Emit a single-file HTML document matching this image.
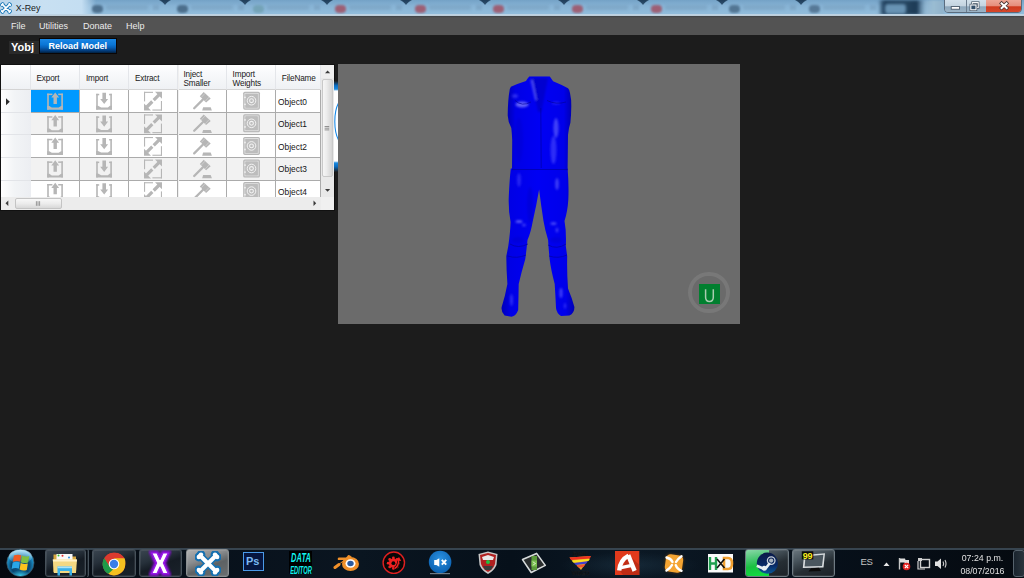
<!DOCTYPE html><html><head><meta charset="utf-8"><style>
*{margin:0;padding:0;box-sizing:border-box}
html,body{width:1024px;height:578px;overflow:hidden;background:#1c1c1c;font-family:"Liberation Sans",sans-serif}
.a{position:absolute}
#title{left:0;top:0;width:1024px;height:16px;background:linear-gradient(#74a2c6,#86b2d4 35%,#8ebada 70%,#94bedc);overflow:hidden}
#menubar{left:0;top:16px;width:1024px;height:18.8px;background:linear-gradient(#3c4044 0,#4a4c4e 1px,#535353 2px,#535353)}
.menu{top:0;height:18px;line-height:20px;font-size:9px;color:#ececec}
#taskbar{left:0;top:548px;width:1024px;height:30px;background:#0a1119;overflow:hidden}
#grid{left:1px;top:65px;width:332px;height:145px;background:#f0f0f0;overflow:hidden}
.hdr{top:0;height:24.5px;background:linear-gradient(#ffffff,#f8f9fb 35%,#eff1f4);border-right:1px solid #e4e6ea;border-bottom:1px solid #d4d4d4}
.ht{position:absolute;font-size:8.2px;line-height:9px;color:#202020;white-space:nowrap;letter-spacing:-0.15px}
.rh{left:0;width:30.5px;background:linear-gradient(90deg,#ffffff,#f2f4f6 45%,#eceef2);border-bottom:1px solid #e2e4e8;border-right:1px solid #b4b4b4}
.cell{border-right:1px solid #ababab;border-bottom:1px solid #ababab;overflow:hidden}
.fn{position:absolute;font-size:8.4px;color:#151515;white-space:nowrap}
</style></head><body>
<div id="title" class="a">
<div class="a" style="left:159px;top:0;width:12px;height:4px;background:linear-gradient(#2a4a66,#5a86aa);clip-path:polygon(0 0,100% 0,50% 100%)"></div>
<div class="a" style="left:239px;top:0;width:12px;height:4px;background:linear-gradient(#2a4a66,#5a86aa);clip-path:polygon(0 0,100% 0,50% 100%)"></div>
<div class="a" style="left:321px;top:0;width:12px;height:4px;background:linear-gradient(#2a4a66,#5a86aa);clip-path:polygon(0 0,100% 0,50% 100%)"></div>
<div class="a" style="left:400px;top:0;width:12px;height:4px;background:linear-gradient(#2a4a66,#5a86aa);clip-path:polygon(0 0,100% 0,50% 100%)"></div>
<div class="a" style="left:479px;top:0;width:12px;height:4px;background:linear-gradient(#2a4a66,#5a86aa);clip-path:polygon(0 0,100% 0,50% 100%)"></div>
<div class="a" style="left:558px;top:0;width:12px;height:4px;background:linear-gradient(#2a4a66,#5a86aa);clip-path:polygon(0 0,100% 0,50% 100%)"></div>
<div class="a" style="left:637px;top:0;width:12px;height:4px;background:linear-gradient(#2a4a66,#5a86aa);clip-path:polygon(0 0,100% 0,50% 100%)"></div>
<div class="a" style="left:716px;top:0;width:12px;height:4px;background:linear-gradient(#2a4a66,#5a86aa);clip-path:polygon(0 0,100% 0,50% 100%)"></div>
<div class="a" style="left:795px;top:0;width:12px;height:4px;background:linear-gradient(#2a4a66,#5a86aa);clip-path:polygon(0 0,100% 0,50% 100%)"></div>
</div>
<div class="a" style="left:0;top:0;width:96px;height:15px;background:linear-gradient(90deg,#bcd6ea 0,#c8e0f2 45%,#c4def2 85%,rgba(160,196,222,0) 100%)"></div>
<div class="a" style="left:91.5px;top:4.5px;width:11px;height:8.5px;border-radius:40%;background:#3f5f7c;filter:blur(1.2px);opacity:0.8"></div>
<div class="a" style="left:106px;top:5px;width:42px;height:5px;background:#6a8eac;filter:blur(1.6px);opacity:0.3"></div>
<div class="a" style="left:153px;top:5px;width:6px;height:5px;background:#6f93b2;filter:blur(1.2px);opacity:0.4"></div>
<div class="a" style="left:176.5px;top:4.5px;width:11px;height:8.5px;border-radius:40%;background:#3d5d7a;filter:blur(1.2px);opacity:0.8"></div>
<div class="a" style="left:191px;top:5px;width:42px;height:5px;background:#6a8eac;filter:blur(1.6px);opacity:0.3"></div>
<div class="a" style="left:238px;top:5px;width:6px;height:5px;background:#6f93b2;filter:blur(1.2px);opacity:0.4"></div>
<div class="a" style="left:252.5px;top:4.5px;width:11px;height:8.5px;border-radius:40%;background:#6f9fb0;filter:blur(1.2px);opacity:0.8"></div>
<div class="a" style="left:267px;top:5px;width:42px;height:5px;background:#6a8eac;filter:blur(1.6px);opacity:0.3"></div>
<div class="a" style="left:314px;top:5px;width:6px;height:5px;background:#6f93b2;filter:blur(1.2px);opacity:0.4"></div>
<div class="a" style="left:334.5px;top:4.5px;width:11px;height:8.5px;border-radius:40%;background:#a24a5c;filter:blur(1.2px);opacity:0.8"></div>
<div class="a" style="left:349px;top:5px;width:42px;height:5px;background:#6a8eac;filter:blur(1.6px);opacity:0.3"></div>
<div class="a" style="left:396px;top:5px;width:6px;height:5px;background:#6f93b2;filter:blur(1.2px);opacity:0.4"></div>
<div class="a" style="left:414.5px;top:4.5px;width:11px;height:8.5px;border-radius:40%;background:#a24a5c;filter:blur(1.2px);opacity:0.8"></div>
<div class="a" style="left:429px;top:5px;width:42px;height:5px;background:#6a8eac;filter:blur(1.6px);opacity:0.3"></div>
<div class="a" style="left:476px;top:5px;width:6px;height:5px;background:#6f93b2;filter:blur(1.2px);opacity:0.4"></div>
<div class="a" style="left:492.5px;top:4.5px;width:11px;height:8.5px;border-radius:40%;background:#a24a5c;filter:blur(1.2px);opacity:0.8"></div>
<div class="a" style="left:507px;top:5px;width:42px;height:5px;background:#6a8eac;filter:blur(1.6px);opacity:0.3"></div>
<div class="a" style="left:554px;top:5px;width:6px;height:5px;background:#6f93b2;filter:blur(1.2px);opacity:0.4"></div>
<div class="a" style="left:571.5px;top:4.5px;width:11px;height:8.5px;border-radius:40%;background:#a24a5c;filter:blur(1.2px);opacity:0.8"></div>
<div class="a" style="left:586px;top:5px;width:42px;height:5px;background:#6a8eac;filter:blur(1.6px);opacity:0.3"></div>
<div class="a" style="left:633px;top:5px;width:6px;height:5px;background:#6f93b2;filter:blur(1.2px);opacity:0.4"></div>
<div class="a" style="left:650.5px;top:4.5px;width:11px;height:8.5px;border-radius:40%;background:#a24a5c;filter:blur(1.2px);opacity:0.8"></div>
<div class="a" style="left:665px;top:5px;width:42px;height:5px;background:#6a8eac;filter:blur(1.6px);opacity:0.3"></div>
<div class="a" style="left:712px;top:5px;width:6px;height:5px;background:#6f93b2;filter:blur(1.2px);opacity:0.4"></div>
<div class="a" style="left:728.5px;top:4.5px;width:11px;height:8.5px;border-radius:40%;background:#456683;filter:blur(1.2px);opacity:0.8"></div>
<div class="a" style="left:743px;top:5px;width:42px;height:5px;background:#6a8eac;filter:blur(1.6px);opacity:0.3"></div>
<div class="a" style="left:790px;top:5px;width:6px;height:5px;background:#6f93b2;filter:blur(1.2px);opacity:0.4"></div>
<div class="a" style="left:808.5px;top:4.5px;width:11px;height:8.5px;border-radius:40%;background:#4a6a88;filter:blur(1.2px);opacity:0.8"></div>
<div class="a" style="left:823px;top:5px;width:42px;height:5px;background:#6a8eac;filter:blur(1.6px);opacity:0.3"></div>
<div class="a" style="left:870px;top:5px;width:6px;height:5px;background:#6f93b2;filter:blur(1.2px);opacity:0.4"></div>
<div class="a" style="left:160px;top:-1px;width:10px;height:6px;background:#1d3a56;clip-path:polygon(0 0,100% 0,50% 100%);filter:blur(0.6px);opacity:0.75"></div>
<div class="a" style="left:240px;top:-1px;width:10px;height:6px;background:#1d3a56;clip-path:polygon(0 0,100% 0,50% 100%);filter:blur(0.6px);opacity:0.75"></div>
<div class="a" style="left:322px;top:-1px;width:10px;height:6px;background:#1d3a56;clip-path:polygon(0 0,100% 0,50% 100%);filter:blur(0.6px);opacity:0.75"></div>
<div class="a" style="left:401px;top:-1px;width:10px;height:6px;background:#1d3a56;clip-path:polygon(0 0,100% 0,50% 100%);filter:blur(0.6px);opacity:0.75"></div>
<div class="a" style="left:480px;top:-1px;width:10px;height:6px;background:#1d3a56;clip-path:polygon(0 0,100% 0,50% 100%);filter:blur(0.6px);opacity:0.75"></div>
<div class="a" style="left:559px;top:-1px;width:10px;height:6px;background:#1d3a56;clip-path:polygon(0 0,100% 0,50% 100%);filter:blur(0.6px);opacity:0.75"></div>
<div class="a" style="left:638px;top:-1px;width:10px;height:6px;background:#1d3a56;clip-path:polygon(0 0,100% 0,50% 100%);filter:blur(0.6px);opacity:0.75"></div>
<div class="a" style="left:717px;top:-1px;width:10px;height:6px;background:#1d3a56;clip-path:polygon(0 0,100% 0,50% 100%);filter:blur(0.6px);opacity:0.75"></div>
<div class="a" style="left:796px;top:-1px;width:10px;height:6px;background:#1d3a56;clip-path:polygon(0 0,100% 0,50% 100%);filter:blur(0.6px);opacity:0.75"></div>
<div class="a" style="left:878px;top:0;width:48px;height:15px;background:linear-gradient(90deg,rgba(30,60,90,0),#1f3f5c 12%,#24445f 60%,#1c3a55 80%,rgba(60,100,130,0));filter:blur(1.5px)"></div>
<div class="a" style="left:885px;top:4px;width:21px;height:10px;border-radius:3px;background:#6893b4;filter:blur(1.5px)"></div>
<div class="a" style="left:918px;top:0;width:26px;height:15px;background:linear-gradient(90deg,rgba(140,176,200,0),#9abcd2 60%,#8fb2ca);filter:blur(1px)"></div>
<div class="a" style="left:0;top:14.2px;width:1024px;height:1.8px;background:linear-gradient(#b0cade,#cfdfea 60%,#a0b0bc)"></div>
<svg class="a" style="left:0;top:2px" width="12" height="12" viewBox="0 0 26 25">
<g stroke="#1a78b8" stroke-width="7.6" stroke-linecap="round"><path d="M5 4.5 L21 20.5 M21 4.5 L5 20.5"/></g>
<g fill="#1a78b8"><circle cx="3.8" cy="6" r="3.6"/><circle cx="6" cy="3.6" r="3.6"/><circle cx="20" cy="3.6" r="3.6"/><circle cx="22.2" cy="6" r="3.6"/><circle cx="3.8" cy="19" r="3.6"/><circle cx="6" cy="21.4" r="3.6"/><circle cx="20" cy="21.4" r="3.6"/><circle cx="22.2" cy="19" r="3.6"/></g>
<g stroke="#fff" stroke-width="3.6" stroke-linecap="round"><path d="M5 4.5 L21 20.5 M21 4.5 L5 20.5"/></g>
<g fill="#fff"><circle cx="3.8" cy="6" r="1.9"/><circle cx="6" cy="3.6" r="1.9"/><circle cx="20" cy="3.6" r="1.9"/><circle cx="22.2" cy="6" r="1.9"/><circle cx="3.8" cy="19" r="1.9"/><circle cx="6" cy="21.4" r="1.9"/><circle cx="20" cy="21.4" r="1.9"/><circle cx="22.2" cy="19" r="1.9"/></g>
</svg>
<div class="a" style="left:15.8px;top:2.4px;font:8.9px 'Liberation Sans';color:#1a1a1a;line-height:12px">X-Rey</div>
<div class="a" style="left:944px;top:-2px;width:78px;height:15.2px;border-radius:0 0 4px 4px;border:1px solid #5a6c7e;background:#9fb6c8;overflow:hidden"><div class="a" style="left:0;top:0;width:21px;height:15px;background:linear-gradient(#d4e2ec,#c4d4e0 45%,#8ea8bc 52%,#a0b8ca)"></div><div class="a" style="left:21px;top:0;width:1px;height:15px;background:#6b7d8e"></div><div class="a" style="left:22px;top:0;width:19px;height:15px;background:linear-gradient(#d4e2ec,#c4d4e0 45%,#8ea8bc 52%,#a0b8ca)"></div><div class="a" style="left:41px;top:0;width:36px;height:15px;background:linear-gradient(#eeaa9a,#e68e7c 45%,#cf3a1e 52%,#d84c30)"></div></div>
<svg class="a" style="left:944px;top:0" width="80" height="14" viewBox="0 0 80 14">
<rect x="7.2" y="6.6" width="8.4" height="2.6" fill="#fff" stroke="#3e4e5e" stroke-width="0.8"/>
<rect x="28.6" y="2.6" width="5.6" height="5" fill="none" stroke="#3e4e5e" stroke-width="2.4"/>
<rect x="28.6" y="2.6" width="5.6" height="5" fill="none" stroke="#fff" stroke-width="1.1"/>
<rect x="26.8" y="5" width="5.2" height="4.8" fill="#8aa0b4" stroke="#3e4e5e" stroke-width="2.4"/>
<rect x="26.8" y="5" width="5.2" height="4.8" fill="#34506a" stroke="#fff" stroke-width="1.1"/>
<path d="M57.6 3.4 L62.6 8 M62.6 3.4 L57.6 8" stroke="#4a3434" stroke-width="3.6" stroke-linecap="square"/>
<path d="M57.6 3.4 L62.6 8 M62.6 3.4 L57.6 8" stroke="#fff" stroke-width="2" stroke-linecap="square"/>
</svg>
<div id="menubar" class="a">
<div class="menu a" style="left:11px">File</div>
<div class="menu a" style="left:39px">Utilities</div>
<div class="menu a" style="left:83px">Donate</div>
<div class="menu a" style="left:126px">Help</div>
</div>
<div class="a" style="left:9px;top:41px;width:30px;height:12.5px;background:#2a2a2a"></div>
<div class="a" style="left:11px;top:40px;font:bold 11px 'Liberation Sans';color:#fff;line-height:14px">Yobj</div>
<div class="a" style="left:39px;top:37.7px;width:77.5px;height:16.5px;background:#0a0606;"></div>
<div class="a" style="left:40.1px;top:38.5px;width:75.9px;height:14.8px;background:linear-gradient(#1a88e6,#0a76d6 40%,#0660b8 60%,#033a78 85%,#01203e);"></div>
<div class="a" style="left:48.5px;top:40px;font:bold 9px 'Liberation Sans';color:#fff;line-height:13px">Reload Model</div>
<div class="a" style="left:0;top:64px;width:335px;height:147px;background:#111"></div>
<div id="grid" class="a">
<div class="a hdr" style="left:0;width:30px"></div>
<div class="a hdr" style="left:30px;width:49.2px"></div>
<div class="a hdr" style="left:79.2px;width:49.2px"></div>
<div class="a hdr" style="left:128.4px;width:49.099999999999994px"></div>
<div class="a hdr" style="left:177.5px;width:48.30000000000001px"></div>
<div class="a hdr" style="left:225.8px;width:48.80000000000001px"></div>
<div class="a hdr" style="left:274.6px;width:45.5px"></div>
<div class="ht" style="left:35.5px;top:9px">Export</div>
<div class="ht" style="left:84.9px;top:9px">Import</div>
<div class="ht" style="left:134px;top:9px">Extract</div>
<div class="ht" style="left:182.5px;top:4.5px">Inject<br>Smaller</div>
<div class="ht" style="left:231.6px;top:4.5px">Import<br>Weights</div>
<div class="ht" style="left:280.8px;top:9px">FileName</div>
<div class="a rh" style="top:25px;height:22.5px"></div>
<div class="a cell" style="left:30px;top:25px;width:49.2px;height:22.5px;background:#0099ff"></div>
<div class="a cell" style="left:79.2px;top:25px;width:49.2px;height:22.5px;background:#ffffff"></div>
<div class="a cell" style="left:128.4px;top:25px;width:49.099999999999994px;height:22.5px;background:#ffffff"></div>
<div class="a cell" style="left:177.5px;top:25px;width:48.30000000000001px;height:22.5px;background:#ffffff"></div>
<div class="a cell" style="left:225.8px;top:25px;width:48.80000000000001px;height:22.5px;background:#ffffff"></div>
<div class="a cell" style="left:274.6px;top:25px;width:45.5px;height:22.5px;background:#ffffff"></div>
<div class="a rh" style="top:47.5px;height:22.80000000000001px"></div>
<div class="a cell" style="left:30px;top:47.5px;width:49.2px;height:22.80000000000001px;background:#f2f2f2"></div>
<div class="a cell" style="left:79.2px;top:47.5px;width:49.2px;height:22.80000000000001px;background:#f2f2f2"></div>
<div class="a cell" style="left:128.4px;top:47.5px;width:49.099999999999994px;height:22.80000000000001px;background:#f2f2f2"></div>
<div class="a cell" style="left:177.5px;top:47.5px;width:48.30000000000001px;height:22.80000000000001px;background:#f2f2f2"></div>
<div class="a cell" style="left:225.8px;top:47.5px;width:48.80000000000001px;height:22.80000000000001px;background:#f2f2f2"></div>
<div class="a cell" style="left:274.6px;top:47.5px;width:45.5px;height:22.80000000000001px;background:#f2f2f2"></div>
<div class="a rh" style="top:70.30000000000001px;height:22.69999999999999px"></div>
<div class="a cell" style="left:30px;top:70.30000000000001px;width:49.2px;height:22.69999999999999px;background:#ffffff"></div>
<div class="a cell" style="left:79.2px;top:70.30000000000001px;width:49.2px;height:22.69999999999999px;background:#ffffff"></div>
<div class="a cell" style="left:128.4px;top:70.30000000000001px;width:49.099999999999994px;height:22.69999999999999px;background:#ffffff"></div>
<div class="a cell" style="left:177.5px;top:70.30000000000001px;width:48.30000000000001px;height:22.69999999999999px;background:#ffffff"></div>
<div class="a cell" style="left:225.8px;top:70.30000000000001px;width:48.80000000000001px;height:22.69999999999999px;background:#ffffff"></div>
<div class="a cell" style="left:274.6px;top:70.30000000000001px;width:45.5px;height:22.69999999999999px;background:#ffffff"></div>
<div class="a rh" style="top:93px;height:22.69999999999999px"></div>
<div class="a cell" style="left:30px;top:93px;width:49.2px;height:22.69999999999999px;background:#f2f2f2"></div>
<div class="a cell" style="left:79.2px;top:93px;width:49.2px;height:22.69999999999999px;background:#f2f2f2"></div>
<div class="a cell" style="left:128.4px;top:93px;width:49.099999999999994px;height:22.69999999999999px;background:#f2f2f2"></div>
<div class="a cell" style="left:177.5px;top:93px;width:48.30000000000001px;height:22.69999999999999px;background:#f2f2f2"></div>
<div class="a cell" style="left:225.8px;top:93px;width:48.80000000000001px;height:22.69999999999999px;background:#f2f2f2"></div>
<div class="a cell" style="left:274.6px;top:93px;width:45.5px;height:22.69999999999999px;background:#f2f2f2"></div>
<div class="a rh" style="top:115.69999999999999px;height:22.700000000000017px"></div>
<div class="a cell" style="left:30px;top:115.69999999999999px;width:49.2px;height:22.700000000000017px;background:#ffffff"></div>
<div class="a cell" style="left:79.2px;top:115.69999999999999px;width:49.2px;height:22.700000000000017px;background:#ffffff"></div>
<div class="a cell" style="left:128.4px;top:115.69999999999999px;width:49.099999999999994px;height:22.700000000000017px;background:#ffffff"></div>
<div class="a cell" style="left:177.5px;top:115.69999999999999px;width:48.30000000000001px;height:22.700000000000017px;background:#ffffff"></div>
<div class="a cell" style="left:225.8px;top:115.69999999999999px;width:48.80000000000001px;height:22.700000000000017px;background:#ffffff"></div>
<div class="a cell" style="left:274.6px;top:115.69999999999999px;width:45.5px;height:22.700000000000017px;background:#ffffff"></div>
</div>
<svg class="a" style="left:0;top:0" width="334" height="197" viewBox="0 0 334 197"><defs><clipPath id="gc"><rect x="31" y="89.5" width="290" height="107.5"/></clipPath></defs><g clip-path="url(#gc)"><g transform="translate(0,-45.20)" fill="#b6b6b6"><rect x="47.2" y="138.8" width="1.6" height="16.1"/><rect x="61.3" y="138.8" width="1.6" height="16.1"/><rect x="47.2" y="138.8" width="5.2" height="1.5"/><rect x="58.2" y="138.8" width="4.7" height="1.5"/><path d="M47.2 151.2 L49.3 151.2 L51.8 152.8 L58.6 152.8 L61.1 151.2 L62.9 151.2 L62.9 154.9 L47.2 154.9Z"/><path d="M55.2 137.6 L59.1 142.8 L56.9 142.8 L56.9 149.1 L53.5 149.1 L53.5 142.8 L51.3 142.8Z"/></g><g transform="translate(0,-45.20)" fill="#b6b6b6"><rect x="96.2" y="139" width="1.6" height="15.9"/><rect x="110.3" y="139" width="1.6" height="15.9"/><rect x="96.2" y="139" width="3" height="1.5"/><rect x="109.1" y="139" width="2.8" height="1.5"/><path d="M96.2 150.9 L98 150.9 L101.2 152.6 L107.9 152.6 L109.9 150.9 L111.9 150.9 L111.9 154.9 L96.2 154.9Z"/><path d="M102.4 138 L106 138 L106 144.2 L108.1 144.2 L104.2 149.3 L100.2 144.2 L102.4 144.2Z"/></g><g transform="translate(0,-45.20)" fill="#b6b6b6"><rect x="144" y="137" width="9" height="1.1"/><rect x="144" y="137" width="1.1" height="9.6"/><rect x="152.4" y="154.7" width="9.6" height="1.1"/><rect x="160.9" y="146.2" width="1.1" height="9.6"/><path d="M155 137 L162 137 L162 144Z"/><path d="M144 148.8 L144 155.8 L151 155.8Z"/><path d="M159.2 139.8 L153.7 145.3 M152.3 146.7 L146.8 152.2" stroke="#b6b6b6" stroke-width="3.2"/></g><g transform="translate(0,-45.20)" fill="#b6b6b6"><path d="M203.7 137.2 L210.7 143.6 L206.1 147.7 L199.8 141.4Z"/><path d="M201.2 142.65 L205 138.55 M205.17 146.43 L208.97 142.33" stroke="#dcdcdc" stroke-width="0.6"/><path d="M202.8 144.8 L194.2 153.4" stroke="#b6b6b6" stroke-width="2.3" stroke-linecap="round"/><path d="M203.1 152.5 L210.7 152.5 L211.9 155.7 L202.2 155.7Z"/></g><g transform="translate(0,-45.20)"><rect x="243.2" y="136.9" width="16.7" height="18" rx="1.6" fill="#b6b6b6"/><rect x="244.9" y="138.5" width="13.3" height="14.8" fill="none" stroke="#e6e6e6" stroke-width="0.8"/><rect x="246.1" y="139.2" width="10.8" height="13.3" fill="#bdbdbd"/><circle cx="251.5" cy="145.9" r="4.3" fill="none" stroke="#f2f2f2" stroke-width="1"/><circle cx="251.5" cy="145.9" r="1.9" fill="none" stroke="#f4f4f4" stroke-width="1.1"/><circle cx="245" cy="142.5" r="0.9" fill="#f0f0f0"/><circle cx="245" cy="149.5" r="0.9" fill="#f0f0f0"/></g><g transform="translate(0,-22.60)" fill="#b6b6b6"><rect x="47.2" y="138.8" width="1.6" height="16.1"/><rect x="61.3" y="138.8" width="1.6" height="16.1"/><rect x="47.2" y="138.8" width="5.2" height="1.5"/><rect x="58.2" y="138.8" width="4.7" height="1.5"/><path d="M47.2 151.2 L49.3 151.2 L51.8 152.8 L58.6 152.8 L61.1 151.2 L62.9 151.2 L62.9 154.9 L47.2 154.9Z"/><path d="M55.2 137.6 L59.1 142.8 L56.9 142.8 L56.9 149.1 L53.5 149.1 L53.5 142.8 L51.3 142.8Z"/></g><g transform="translate(0,-22.60)" fill="#b6b6b6"><rect x="96.2" y="139" width="1.6" height="15.9"/><rect x="110.3" y="139" width="1.6" height="15.9"/><rect x="96.2" y="139" width="3" height="1.5"/><rect x="109.1" y="139" width="2.8" height="1.5"/><path d="M96.2 150.9 L98 150.9 L101.2 152.6 L107.9 152.6 L109.9 150.9 L111.9 150.9 L111.9 154.9 L96.2 154.9Z"/><path d="M102.4 138 L106 138 L106 144.2 L108.1 144.2 L104.2 149.3 L100.2 144.2 L102.4 144.2Z"/></g><g transform="translate(0,-22.60)" fill="#b6b6b6"><rect x="144" y="137" width="9" height="1.1"/><rect x="144" y="137" width="1.1" height="9.6"/><rect x="152.4" y="154.7" width="9.6" height="1.1"/><rect x="160.9" y="146.2" width="1.1" height="9.6"/><path d="M155 137 L162 137 L162 144Z"/><path d="M144 148.8 L144 155.8 L151 155.8Z"/><path d="M159.2 139.8 L153.7 145.3 M152.3 146.7 L146.8 152.2" stroke="#b6b6b6" stroke-width="3.2"/></g><g transform="translate(0,-22.60)" fill="#b6b6b6"><path d="M203.7 137.2 L210.7 143.6 L206.1 147.7 L199.8 141.4Z"/><path d="M201.2 142.65 L205 138.55 M205.17 146.43 L208.97 142.33" stroke="#dcdcdc" stroke-width="0.6"/><path d="M202.8 144.8 L194.2 153.4" stroke="#b6b6b6" stroke-width="2.3" stroke-linecap="round"/><path d="M203.1 152.5 L210.7 152.5 L211.9 155.7 L202.2 155.7Z"/></g><g transform="translate(0,-22.60)"><rect x="243.2" y="136.9" width="16.7" height="18" rx="1.6" fill="#b6b6b6"/><rect x="244.9" y="138.5" width="13.3" height="14.8" fill="none" stroke="#e6e6e6" stroke-width="0.8"/><rect x="246.1" y="139.2" width="10.8" height="13.3" fill="#bdbdbd"/><circle cx="251.5" cy="145.9" r="4.3" fill="none" stroke="#f2f2f2" stroke-width="1"/><circle cx="251.5" cy="145.9" r="1.9" fill="none" stroke="#f4f4f4" stroke-width="1.1"/><circle cx="245" cy="142.5" r="0.9" fill="#f0f0f0"/><circle cx="245" cy="149.5" r="0.9" fill="#f0f0f0"/></g><g transform="translate(0,0.00)" fill="#b6b6b6"><rect x="47.2" y="138.8" width="1.6" height="16.1"/><rect x="61.3" y="138.8" width="1.6" height="16.1"/><rect x="47.2" y="138.8" width="5.2" height="1.5"/><rect x="58.2" y="138.8" width="4.7" height="1.5"/><path d="M47.2 151.2 L49.3 151.2 L51.8 152.8 L58.6 152.8 L61.1 151.2 L62.9 151.2 L62.9 154.9 L47.2 154.9Z"/><path d="M55.2 137.6 L59.1 142.8 L56.9 142.8 L56.9 149.1 L53.5 149.1 L53.5 142.8 L51.3 142.8Z"/></g><g transform="translate(0,0.00)" fill="#b6b6b6"><rect x="96.2" y="139" width="1.6" height="15.9"/><rect x="110.3" y="139" width="1.6" height="15.9"/><rect x="96.2" y="139" width="3" height="1.5"/><rect x="109.1" y="139" width="2.8" height="1.5"/><path d="M96.2 150.9 L98 150.9 L101.2 152.6 L107.9 152.6 L109.9 150.9 L111.9 150.9 L111.9 154.9 L96.2 154.9Z"/><path d="M102.4 138 L106 138 L106 144.2 L108.1 144.2 L104.2 149.3 L100.2 144.2 L102.4 144.2Z"/></g><g transform="translate(0,0.00)" fill="#b6b6b6"><rect x="144" y="137" width="9" height="1.1"/><rect x="144" y="137" width="1.1" height="9.6"/><rect x="152.4" y="154.7" width="9.6" height="1.1"/><rect x="160.9" y="146.2" width="1.1" height="9.6"/><path d="M155 137 L162 137 L162 144Z"/><path d="M144 148.8 L144 155.8 L151 155.8Z"/><path d="M159.2 139.8 L153.7 145.3 M152.3 146.7 L146.8 152.2" stroke="#b6b6b6" stroke-width="3.2"/></g><g transform="translate(0,0.00)" fill="#b6b6b6"><path d="M203.7 137.2 L210.7 143.6 L206.1 147.7 L199.8 141.4Z"/><path d="M201.2 142.65 L205 138.55 M205.17 146.43 L208.97 142.33" stroke="#dcdcdc" stroke-width="0.6"/><path d="M202.8 144.8 L194.2 153.4" stroke="#b6b6b6" stroke-width="2.3" stroke-linecap="round"/><path d="M203.1 152.5 L210.7 152.5 L211.9 155.7 L202.2 155.7Z"/></g><g transform="translate(0,0.00)"><rect x="243.2" y="136.9" width="16.7" height="18" rx="1.6" fill="#b6b6b6"/><rect x="244.9" y="138.5" width="13.3" height="14.8" fill="none" stroke="#e6e6e6" stroke-width="0.8"/><rect x="246.1" y="139.2" width="10.8" height="13.3" fill="#bdbdbd"/><circle cx="251.5" cy="145.9" r="4.3" fill="none" stroke="#f2f2f2" stroke-width="1"/><circle cx="251.5" cy="145.9" r="1.9" fill="none" stroke="#f4f4f4" stroke-width="1.1"/><circle cx="245" cy="142.5" r="0.9" fill="#f0f0f0"/><circle cx="245" cy="149.5" r="0.9" fill="#f0f0f0"/></g><g transform="translate(0,22.60)" fill="#b6b6b6"><rect x="47.2" y="138.8" width="1.6" height="16.1"/><rect x="61.3" y="138.8" width="1.6" height="16.1"/><rect x="47.2" y="138.8" width="5.2" height="1.5"/><rect x="58.2" y="138.8" width="4.7" height="1.5"/><path d="M47.2 151.2 L49.3 151.2 L51.8 152.8 L58.6 152.8 L61.1 151.2 L62.9 151.2 L62.9 154.9 L47.2 154.9Z"/><path d="M55.2 137.6 L59.1 142.8 L56.9 142.8 L56.9 149.1 L53.5 149.1 L53.5 142.8 L51.3 142.8Z"/></g><g transform="translate(0,22.60)" fill="#b6b6b6"><rect x="96.2" y="139" width="1.6" height="15.9"/><rect x="110.3" y="139" width="1.6" height="15.9"/><rect x="96.2" y="139" width="3" height="1.5"/><rect x="109.1" y="139" width="2.8" height="1.5"/><path d="M96.2 150.9 L98 150.9 L101.2 152.6 L107.9 152.6 L109.9 150.9 L111.9 150.9 L111.9 154.9 L96.2 154.9Z"/><path d="M102.4 138 L106 138 L106 144.2 L108.1 144.2 L104.2 149.3 L100.2 144.2 L102.4 144.2Z"/></g><g transform="translate(0,22.60)" fill="#b6b6b6"><rect x="144" y="137" width="9" height="1.1"/><rect x="144" y="137" width="1.1" height="9.6"/><rect x="152.4" y="154.7" width="9.6" height="1.1"/><rect x="160.9" y="146.2" width="1.1" height="9.6"/><path d="M155 137 L162 137 L162 144Z"/><path d="M144 148.8 L144 155.8 L151 155.8Z"/><path d="M159.2 139.8 L153.7 145.3 M152.3 146.7 L146.8 152.2" stroke="#b6b6b6" stroke-width="3.2"/></g><g transform="translate(0,22.60)" fill="#b6b6b6"><path d="M203.7 137.2 L210.7 143.6 L206.1 147.7 L199.8 141.4Z"/><path d="M201.2 142.65 L205 138.55 M205.17 146.43 L208.97 142.33" stroke="#dcdcdc" stroke-width="0.6"/><path d="M202.8 144.8 L194.2 153.4" stroke="#b6b6b6" stroke-width="2.3" stroke-linecap="round"/><path d="M203.1 152.5 L210.7 152.5 L211.9 155.7 L202.2 155.7Z"/></g><g transform="translate(0,22.60)"><rect x="243.2" y="136.9" width="16.7" height="18" rx="1.6" fill="#b6b6b6"/><rect x="244.9" y="138.5" width="13.3" height="14.8" fill="none" stroke="#e6e6e6" stroke-width="0.8"/><rect x="246.1" y="139.2" width="10.8" height="13.3" fill="#bdbdbd"/><circle cx="251.5" cy="145.9" r="4.3" fill="none" stroke="#f2f2f2" stroke-width="1"/><circle cx="251.5" cy="145.9" r="1.9" fill="none" stroke="#f4f4f4" stroke-width="1.1"/><circle cx="245" cy="142.5" r="0.9" fill="#f0f0f0"/><circle cx="245" cy="149.5" r="0.9" fill="#f0f0f0"/></g><g transform="translate(0,45.20)" fill="#b6b6b6"><rect x="47.2" y="138.8" width="1.6" height="16.1"/><rect x="61.3" y="138.8" width="1.6" height="16.1"/><rect x="47.2" y="138.8" width="5.2" height="1.5"/><rect x="58.2" y="138.8" width="4.7" height="1.5"/><path d="M47.2 151.2 L49.3 151.2 L51.8 152.8 L58.6 152.8 L61.1 151.2 L62.9 151.2 L62.9 154.9 L47.2 154.9Z"/><path d="M55.2 137.6 L59.1 142.8 L56.9 142.8 L56.9 149.1 L53.5 149.1 L53.5 142.8 L51.3 142.8Z"/></g><g transform="translate(0,45.20)" fill="#b6b6b6"><rect x="96.2" y="139" width="1.6" height="15.9"/><rect x="110.3" y="139" width="1.6" height="15.9"/><rect x="96.2" y="139" width="3" height="1.5"/><rect x="109.1" y="139" width="2.8" height="1.5"/><path d="M96.2 150.9 L98 150.9 L101.2 152.6 L107.9 152.6 L109.9 150.9 L111.9 150.9 L111.9 154.9 L96.2 154.9Z"/><path d="M102.4 138 L106 138 L106 144.2 L108.1 144.2 L104.2 149.3 L100.2 144.2 L102.4 144.2Z"/></g><g transform="translate(0,45.20)" fill="#b6b6b6"><rect x="144" y="137" width="9" height="1.1"/><rect x="144" y="137" width="1.1" height="9.6"/><rect x="152.4" y="154.7" width="9.6" height="1.1"/><rect x="160.9" y="146.2" width="1.1" height="9.6"/><path d="M155 137 L162 137 L162 144Z"/><path d="M144 148.8 L144 155.8 L151 155.8Z"/><path d="M159.2 139.8 L153.7 145.3 M152.3 146.7 L146.8 152.2" stroke="#b6b6b6" stroke-width="3.2"/></g><g transform="translate(0,45.20)" fill="#b6b6b6"><path d="M203.7 137.2 L210.7 143.6 L206.1 147.7 L199.8 141.4Z"/><path d="M201.2 142.65 L205 138.55 M205.17 146.43 L208.97 142.33" stroke="#dcdcdc" stroke-width="0.6"/><path d="M202.8 144.8 L194.2 153.4" stroke="#b6b6b6" stroke-width="2.3" stroke-linecap="round"/><path d="M203.1 152.5 L210.7 152.5 L211.9 155.7 L202.2 155.7Z"/></g><g transform="translate(0,45.20)"><rect x="243.2" y="136.9" width="16.7" height="18" rx="1.6" fill="#b6b6b6"/><rect x="244.9" y="138.5" width="13.3" height="14.8" fill="none" stroke="#e6e6e6" stroke-width="0.8"/><rect x="246.1" y="139.2" width="10.8" height="13.3" fill="#bdbdbd"/><circle cx="251.5" cy="145.9" r="4.3" fill="none" stroke="#f2f2f2" stroke-width="1"/><circle cx="251.5" cy="145.9" r="1.9" fill="none" stroke="#f4f4f4" stroke-width="1.1"/><circle cx="245" cy="142.5" r="0.9" fill="#f0f0f0"/><circle cx="245" cy="149.5" r="0.9" fill="#f0f0f0"/></g></g></svg>
<svg class="a" style="left:0;top:0" width="40" height="120"><path d="M6 98.2 L9.8 101.7 L6 105.2Z" fill="#2a2a2a"/></svg>
<div class="fn a" style="left:278px;top:97.60px;line-height:9px">Object0</div>
<div class="fn a" style="left:278px;top:120.20px;line-height:9px">Object1</div>
<div class="fn a" style="left:278px;top:142.80px;line-height:9px">Object2</div>
<div class="fn a" style="left:278px;top:165.40px;line-height:9px">Object3</div>
<div class="fn a" style="left:278px;top:188.00px;line-height:9px">Object4</div>
<div class="a" style="left:321.2px;top:65px;width:12.4px;height:132.5px;background:#e9e9e9"></div>
<div class="a" style="left:321.2px;top:65px;width:12.4px;height:12.6px;background:#efefef"></div>
<svg class="a" style="left:321px;top:65px" width="13" height="132"><path d="M4 8.2 L6.6 5.4 L9.2 8.2Z" fill="#3a3a3a"/><path d="M4 124 L6.6 126.8 L9.2 124Z" fill="#3a3a3a"/></svg>
<div class="a" style="left:322.3px;top:78.5px;width:10.3px;height:98.8px;border-radius:2px;border:1px solid #c9c9c9;background:linear-gradient(90deg,#f6f6f6,#ececec 40%,#d4d4d4)"></div>
<svg class="a" style="left:322px;top:120px" width="10" height="16"><path d="M2.6 6.5h4.6M2.6 8.2h4.6M2.6 9.9h4.6" stroke="#7a7a7a" stroke-width="0.8"/></svg>
<div class="a" style="left:1px;top:197.3px;width:332.6px;height:12.7px;background:#ececec"></div>
<svg class="a" style="left:0;top:197px" width="334" height="13"><path d="M5.5 6.3 L8.3 3.6 L8.3 9Z" fill="#3a3a3a"/><path d="M313.5 3.6 L316.2 6.3 L313.5 9Z" fill="#3a3a3a"/></svg>
<div class="a" style="left:14.5px;top:198.4px;width:47px;height:10.6px;border-radius:2px;border:1px solid #c4c4c4;background:linear-gradient(#f8f8f8,#ececec 50%,#d8d8d8)"></div>
<svg class="a" style="left:30px;top:198px" width="16" height="11"><path d="M6.4 3.2v4.6M8 3.2v4.6M9.6 3.2v4.6" stroke="#505050" stroke-width="0.55"/></svg>
<div class="a" style="left:321.2px;top:197.3px;width:12.4px;height:12.7px;background:#f0f0f0"></div>
<div class="a" style="left:334px;top:81px;width:4.3px;height:91px;background:linear-gradient(#1c1c1c,#0a6cc0 5%,#1a8ae0 9%,#fff 11%,#fff 88%,#1a8ae0 90%,#0a6cc0 94%,#1c1c1c)"></div>
<svg class="a" style="left:333px;top:100px" width="6" height="44"><path d="M5.5 3 Q1.8 10 1.8 21.5 Q1.8 33 5.5 40" fill="none" stroke="#1a8ae8" stroke-width="1.1"/></svg>
<div class="a" style="left:338px;top:64px;width:402px;height:260px;background:#6b6b6b"></div>
<svg class="a" style="left:0;top:0" width="1024" height="578" viewBox="0 0 1024 578">
<defs>
<linearGradient id="vestg" x1="0" x2="1" y1="0" y2="0">
<stop offset="0" stop-color="#0000b8"/><stop offset="0.12" stop-color="#0000e6"/><stop offset="0.5" stop-color="#0404f4"/><stop offset="0.88" stop-color="#0202ea"/><stop offset="1" stop-color="#0000b4"/>
</linearGradient>
<linearGradient id="legL" x1="0" x2="1" y1="0" y2="0">
<stop offset="0" stop-color="#0000c0"/><stop offset="0.35" stop-color="#0404f4"/><stop offset="0.8" stop-color="#0202e8"/><stop offset="1" stop-color="#0000b8"/>
</linearGradient>
<filter id="bl1" x="-50%" y="-50%" width="200%" height="200%"><feGaussianBlur stdDeviation="1.3"/></filter>
<filter id="bl2"><feGaussianBlur stdDeviation="0.5"/></filter>
<filter id="bl0"><feGaussianBlur stdDeviation="0.35"/></filter>
</defs>
<g filter="url(#bl0)">
<!-- pants -->
<path fill="url(#vestg)" d="M510.8 168.5 L567.6 168.5 Q569 185 568.3 200 Q567.5 212 564.5 221 Q566.5 232 565.8 246 L567.2 256.2 Q566.8 272 568 288.5 Q572 298 574.4 307 Q574.5 313 569.4 315.6 L561 316 Q556.5 313 556 308 Q555.5 296 554.7 284 Q551 270 549.6 259 Q548.5 248 548.1 240 Q545 230 543.5 221 Q541 205 539.1 189.5 Q536.5 205 532.8 221 Q531 232 527.5 240 Q526.5 250 525.3 259 Q521.5 272 518.7 284 Q518.5 298 518.2 310 Q516 316 511.5 316.8 L504.6 315.6 Q501 312 501.6 307.2 Q505 297 507.4 284 Q506.4 270 506.3 256.2 L508.3 246 Q510.3 232 510.6 222 Q508.2 210 508.8 196 Q509.5 180 510.8 168.5 Z"/>
<!-- vest -->
<path fill="url(#vestg)" d="M529.2 76.6 L549.8 76.6 Q551.5 79 553.1 81.3 Q561 84.5 568 88.3 Q569.8 90 570 93 Q571.6 100 571.3 106.3 Q571.2 115 570.4 122.7 Q568.6 128 568 135 L567.6 170.5 L512 170.5 L512.2 140 Q511.8 132 511.3 128 Q508 122 507.7 115.4 Q507.8 100 509.8 89.1 L510.9 86.8 Q518 83.5 526 81 Q527.6 78.5 529.2 76.6 Z"/>
</g>
<!-- shading -->
<g filter="url(#bl1)">
<path d="M531 78 L548 78 L541.5 112 L538 112 Z" fill="#0000c0" opacity="0.7"/>
<path d="M530.5 80 L533 80 L537 100 L535 100Z" fill="#7a7aff" opacity="0.6"/>
<ellipse cx="522" cy="104.5" rx="6.5" ry="3" fill="#8a8aff" opacity="0.7"/>
<ellipse cx="515" cy="96" rx="3" ry="2" fill="#6060ff" opacity="0.45"/>
<ellipse cx="556" cy="128" rx="2.6" ry="10" fill="#6a6aff" opacity="0.6"/>
<ellipse cx="553.5" cy="150" rx="3" ry="14" fill="#5a5aff" opacity="0.5"/>
<ellipse cx="519" cy="140" rx="4" ry="22" fill="#0000c8" opacity="0.35"/>
<ellipse cx="556" cy="103" rx="4" ry="1.5" fill="#4a4aff" opacity="0.4"/>
<ellipse cx="557" cy="184" rx="1.8" ry="6" fill="#7070ff" opacity="0.55"/>
<ellipse cx="519" cy="221.5" rx="3.5" ry="1.6" fill="#8080ff" opacity="0.65"/>
<ellipse cx="553.5" cy="223.5" rx="3" ry="1.5" fill="#7070ff" opacity="0.6"/>
<ellipse cx="557" cy="230" rx="1.5" ry="2.5" fill="#6a6aff" opacity="0.5"/>
<ellipse cx="511.5" cy="300" rx="1.5" ry="6" fill="#5a5aff" opacity="0.5"/>
<ellipse cx="561" cy="293" rx="1.5" ry="5" fill="#6a6aff" opacity="0.6"/>
<ellipse cx="565" cy="306" rx="1.2" ry="3" fill="#5a5aff" opacity="0.45"/>
<ellipse cx="530" cy="205" rx="3" ry="18" fill="#0000c0" opacity="0.4"/>
<ellipse cx="519" cy="180" rx="2" ry="7" fill="#5a5aff" opacity="0.4"/>
<ellipse cx="524" cy="225" rx="2" ry="1.5" fill="#7070ff" opacity="0.5"/>
<ellipse cx="518" cy="240" rx="6" ry="3" fill="#0000c0" opacity="0.35"/>
<ellipse cx="556" cy="240" rx="6" ry="3" fill="#0000c0" opacity="0.35"/>
</g>
<g filter="url(#bl2)" fill="none" stroke="#0000a0" stroke-width="0.8" opacity="0.85">
<path d="M540.8 108 L541.2 168"/>
<path d="M512 169.5 L567.5 169.5"/>
<path d="M515 100.5 Q522 107 531 102"/>
<path d="M547 100.5 Q556 105 566 102"/>
<path d="M510 244 Q518 249 528 244"/>
<path d="M548 245 Q557 250 566 244"/>
<path d="M507.5 256 Q517 259 526 255"/>
<path d="M549 256 Q558 259 567 255"/>
</g>
</svg>
<!-- U button -->
<div class="a" style="left:688px;top:271.5px;width:41.5px;height:41.8px;border-radius:50%;border:4.5px solid #787878;background:#6a6a6a"></div>
<div class="a" style="left:699.4px;top:283.8px;width:20.6px;height:20.6px;background:#017f2f"></div>
<svg class="a" style="left:699.4px;top:283.8px" width="21" height="21" viewBox="0 0 21 21"><path d="M6.6 5.2 L6.6 13.2 Q6.6 17.4 10.4 17.4 Q14.3 17.4 14.3 13.2 L14.3 5.2" fill="none" stroke="#a8ccb0" stroke-width="1.5"/></svg>

<div id="taskbar" class="a"></div>
<div class="a" style="left:0;top:548px;width:1024px;height:2px;background:#37444f"></div>
<div class="a" style="left:0;top:550px;width:1024px;height:28px;background:linear-gradient(90deg,#05090f 0,#08111b 20%,#0a1520 35%,#06101a 50%,#0b1824 62%,#07101a 80%,#050a10 100%)"></div>
<div class="a" style="left:560px;top:552px;width:140px;height:26px;background:radial-gradient(ellipse at center,rgba(40,70,90,0.35),rgba(0,0,0,0) 70%)"></div>
<svg class="a" style="left:5px;top:548px" width="32" height="30" viewBox="0 0 32 30">
<defs><radialGradient id="orb" cx="0.5" cy="0.62" r="0.6"><stop offset="0" stop-color="#0e5a88"/><stop offset="0.55" stop-color="#0a4670"/><stop offset="0.8" stop-color="#1888c0"/><stop offset="1" stop-color="#50c0e8"/></radialGradient>
<radialGradient id="orbglow" cx="0.5" cy="1" r="0.6"><stop offset="0" stop-color="#40e0ff" stop-opacity="0.9"/><stop offset="1" stop-color="#40e0ff" stop-opacity="0"/></radialGradient>
<linearGradient id="orbhl" x1="0" x2="0" y1="0" y2="1"><stop offset="0" stop-color="#e8f6ff" stop-opacity="0.75"/><stop offset="1" stop-color="#a0d8f0" stop-opacity="0.08"/></linearGradient></defs>
<circle cx="15.4" cy="14.8" r="13.6" fill="url(#orb)" stroke="#3a5060" stroke-width="0.8"/>
<ellipse cx="15.4" cy="23" rx="9" ry="5" fill="url(#orbglow)"/>
<ellipse cx="15.4" cy="8.8" rx="11.5" ry="7" fill="url(#orbhl)"/>
<path d="M8.9 7.6 Q12.5 6 16.3 7.3 L15.2 13.6 Q11.8 12.3 7.9 13.8Z" fill="#f05a22"/>
<path d="M17 7.6 Q20.5 9.2 24.3 8 L23.1 14.6 Q19.5 15.8 15.9 14.2Z" fill="#80c040"/>
<path d="M7.7 14.6 Q11.2 13 14.8 14.4 L13.8 20.7 Q10.3 19.4 6.6 21Z" fill="#2aa6e8"/>
<path d="M15.7 14.9 Q19.2 16.6 22.8 15.4 L21.8 22 Q18.2 23.2 14.6 21.6Z" fill="#fcc21e"/>
</svg>
<div class="a" style="left:45px;top:548.5px;width:40.5px;height:28px;border-radius:3px;border:1px solid #46515a;background:linear-gradient(160deg,#3a4550 0,#26303a 35%,#151c24 55%,#1a222a 100%);box-shadow:inset 0 0 0 1px rgba(255,255,255,0.08)"></div>
<div class="a" style="left:86.5px;top:549px;width:2px;height:27.5px;border-radius:0 2px 2px 0;border:1px solid #46515a;border-left:none;background:#1c242c"></div>
<div class="a" style="left:92px;top:548.5px;width:44px;height:28px;border-radius:3px;border:1px solid #46515a;background:linear-gradient(160deg,#3a4550 0,#26303a 35%,#151c24 55%,#1a222a 100%);box-shadow:inset 0 0 0 1px rgba(255,255,255,0.08)"></div>
<div class="a" style="left:139px;top:548.5px;width:43px;height:28px;border-radius:3px;border:1px solid #46515a;background:linear-gradient(160deg,#3a4550 0,#26303a 35%,#151c24 55%,#1a222a 100%);box-shadow:inset 0 0 0 1px rgba(255,255,255,0.08)"></div>
<div class="a" style="left:185.5px;top:548.5px;width:43.5px;height:28px;border-radius:3px;border:1px solid #8a8e90;background:linear-gradient(160deg,#b0b0b0 0,#8a8c8e 35%,#5e6264 60%,#6a6e70 100%);box-shadow:inset 0 0 0 1px rgba(255,255,255,0.08)"></div>
<div class="a" style="left:745.3px;top:548.5px;width:43.6px;height:28px;border-radius:3px;border:1px solid #6e7a82;background:linear-gradient(160deg,#6a767e 0,#48545c 30%,#262e34 60%,#1c2228 100%);box-shadow:inset 0 0 0 1px rgba(255,255,255,0.08)"></div>
<div class="a" style="left:792.2px;top:548.5px;width:43.1px;height:28px;border-radius:3px;border:1px solid #6e7a82;background:linear-gradient(160deg,#6a767e 0,#48545c 30%,#262e34 60%,#1c2228 100%);box-shadow:inset 0 0 0 1px rgba(255,255,255,0.08)"></div>
<div class="a" style="left:746.3px;top:549.5px;width:23px;height:26px;border-radius:2px 0 0 2px;background:linear-gradient(170deg,#8ad8a8 0,#50c878 30%,#18c040 60%,#10e040 100%)"></div>
<div class="a" style="left:1013px;top:549.5px;width:12px;height:27px;border-radius:3px;border:1px solid #56626c;background:linear-gradient(90deg,#1a242e,#2a343c)"></div>
<svg class="a" style="left:52px;top:551.5px" width="27" height="25" viewBox="0 0 27 25">
<path d="M1.5 2.5 L9 2.5 L10.5 4.5 L24 4.5 L24 20 L1.5 20Z" fill="#d8a840"/>
<rect x="4.5" y="2" width="16" height="9" fill="#fafafa"/>
<circle cx="6.5" cy="3.5" r="1" fill="#30c030"/><circle cx="10.5" cy="3.8" r="1" fill="#e03030"/><circle cx="17" cy="5.5" r="1" fill="#3090e0"/>
<path d="M0.8 7.5 L25 7.5 L24 21 L1.8 21Z" fill="#f4d882"/>
<path d="M0.8 7.5 L25 7.5 L24.8 9.5 L1 9.5Z" fill="#fff2c8"/>
<path d="M5.5 14.5 L20 14.5 L20 23.5 L17.5 23.5 L17.5 19 L8 19 L8 23.5 L5.5 23.5Z" fill="#3ab0e8"/>
<path d="M5.5 14.5 L20 14.5 L20 16.2 L5.5 16.2Z" fill="#a8e4fa"/>
</svg>
<svg class="a" style="left:102px;top:551.5px" width="24" height="24" viewBox="0 0 24 24">
<circle cx="12" cy="12" r="11.3" fill="#db3a2e"/>
<path d="M12 12 L2.2 6.35 A11.3 11.3 0 0 0 6.35 21.8 Z" fill="#1e9a48"/>
<path d="M12 12 L6.35 21.8 A11.3 11.3 0 0 0 23.3 12 L12 12Z" fill="#f4c020"/>
<path d="M12 0.7 A11.3 11.3 0 0 0 2.2 6.35 L7 14 L12 6.3 L22.6 6.3 A11.3 11.3 0 0 0 12 0.7Z" fill="#db3a2e"/>
<path d="M12 6.3 L22.6 6.3 A11.3 11.3 0 0 1 23.3 12 L17.2 12Z" fill="#f4c020"/>
<path d="M7 14 L2.2 6.35 A11.3 11.3 0 0 0 6.35 21.8 L11 17.5Z" fill="#1e9a48"/>
<circle cx="12" cy="12" r="5.3" fill="#fff"/>
<circle cx="12" cy="12" r="4.2" fill="#3a7ee8"/>
</svg>
<svg class="a" style="left:148px;top:550px" width="24" height="27" viewBox="0 0 24 27">
<defs><filter id="pglow" x="-30%" y="-30%" width="160%" height="160%"><feGaussianBlur stdDeviation="0.9"/></filter></defs>
<path d="M2.5 2 L9.5 2 L12 7.5 L14.5 2 L21.5 2 L16.5 13 L21.5 24.5 L14.5 24.5 L12 19 L9.5 24.5 L2.5 24.5 L7.5 13Z" fill="#a020f0" stroke="#8a10d8" stroke-width="3" stroke-linejoin="round" filter="url(#pglow)"/>
<path d="M3.8 3 L9 3 L12 9.5 L15 3 L20.2 3 L15.4 13 L20.2 23.5 L15 23.5 L12 17 L9 23.5 L3.8 23.5 L8.6 13Z" fill="#fff" stroke="#9a18e8" stroke-width="1.2" stroke-linejoin="round"/>
</svg>
<svg class="a" style="left:195px;top:550.5px" width="26" height="25" viewBox="0 0 26 25">
<g stroke="#1670b0" stroke-width="7.4" stroke-linecap="round"><path d="M5 4.5 L21 20.5 M21 4.5 L5 20.5"/></g>
<g stroke="#1670b0" stroke-width="4"><circle cx="3.8" cy="6" r="2.4"/><circle cx="6" cy="3.6" r="2.4"/><circle cx="20" cy="3.6" r="2.4"/><circle cx="22.2" cy="6" r="2.4"/><circle cx="3.8" cy="19" r="2.4"/><circle cx="6" cy="21.4" r="2.4"/><circle cx="20" cy="21.4" r="2.4"/><circle cx="22.2" cy="19" r="2.4"/></g>
<g stroke="#fff" stroke-width="4" stroke-linecap="round"><path d="M5 4.5 L21 20.5 M21 4.5 L5 20.5"/></g>
<g fill="#fff"><circle cx="3.8" cy="6" r="2.2"/><circle cx="6" cy="3.6" r="2.2"/><circle cx="20" cy="3.6" r="2.2"/><circle cx="22.2" cy="6" r="2.2"/><circle cx="3.8" cy="19" r="2.2"/><circle cx="6" cy="21.4" r="2.2"/><circle cx="20" cy="21.4" r="2.2"/><circle cx="22.2" cy="19" r="2.2"/></g>
</svg>
<div class="a" style="left:243.3px;top:551.8px;width:21px;height:19px;background:#061640;border:1.3px solid #4a9ae8"></div>
<div class="a" style="left:246px;top:553px;font:bold 11px 'Liberation Sans';color:#7ab8f4;line-height:16px">Ps</div>
<div class="a" style="left:288.5px;top:550.6px;width:23.6px;height:23.8px;background:#000"></div>
<svg class="a" style="left:288.5px;top:550.6px" width="24" height="24" viewBox="0 0 24 24">
<text x="12" y="10.6" font-family="Liberation Sans" font-weight="bold" font-style="italic" font-size="12" text-anchor="middle" fill="#10f4f0" transform="translate(12 0) scale(0.62 1) translate(-12 0)" letter-spacing="0.2">DATA</text>
<text x="12" y="22.6" font-family="Liberation Sans" font-weight="bold" font-style="italic" font-size="11.5" text-anchor="middle" fill="#10f4f0" transform="translate(12 0) scale(0.5 1) translate(-12 0)">EDITOR</text>
</svg>
<svg class="a" style="left:333px;top:551px" width="28" height="24" viewBox="0 0 28 24">
<path d="M3 15 L11 9 L5 9 Q4 7.5 5.5 6.5 L13 6.5 L14.5 5 Q15 3.5 17 4.5 L19 6" fill="#f0902a"/>
<ellipse cx="17.5" cy="13" rx="8.5" ry="7" fill="#f0902a"/>
<path d="M2 16.5 L6 13.5" stroke="#f0902a" stroke-width="3" stroke-linecap="round"/>
<ellipse cx="17.5" cy="12.5" rx="5" ry="4.3" fill="#fff"/>
<ellipse cx="17.5" cy="12.5" rx="3.2" ry="2.8" fill="#2a5aa0"/>
</svg>
<svg class="a" style="left:382px;top:551px" width="25" height="25" viewBox="0 0 25 25">
<circle cx="11.8" cy="11.7" r="10.7" fill="#080808" stroke="#e02020" stroke-width="1.4"/>
<circle cx="16.60" cy="12.20" r="1.4" fill="#f02020"/><circle cx="15.08" cy="15.88" r="1.4" fill="#f02020"/><circle cx="11.40" cy="17.40" r="1.4" fill="#f02020"/><circle cx="7.72" cy="15.88" r="1.4" fill="#f02020"/><circle cx="6.20" cy="12.20" r="1.4" fill="#f02020"/><circle cx="7.72" cy="8.52" r="1.4" fill="#f02020"/><circle cx="11.40" cy="7.00" r="1.4" fill="#f02020"/><circle cx="15.08" cy="8.52" r="1.4" fill="#f02020"/>
<circle cx="11.4" cy="12.2" r="4.6" fill="#f02020"/>
<circle cx="11.4" cy="12.2" r="1.9" fill="#080808"/>
<path d="M12.5 17.5 Q17 15 16.5 9" stroke="#080808" stroke-width="2.6" fill="none"/>
<path d="M12.5 17.5 Q17 15 16.5 9" stroke="#f02020" stroke-width="1.5" fill="none"/>
<path d="M14 9.5 L17 6 L19.2 10Z" fill="#f02020"/>
</svg>
<svg class="a" style="left:428px;top:550px" width="26" height="28" viewBox="0 0 26 28">
<defs><radialGradient id="mg" cx="0.5" cy="0.35" r="0.65"><stop offset="0" stop-color="#2a90e0"/><stop offset="1" stop-color="#0a60b0"/></radialGradient></defs>
<circle cx="12.1" cy="12.1" r="11.3" fill="url(#mg)"/>
<path d="M6.2 10 L8.3 10 L11.3 8.2 L11.3 16.75 L8.3 15 L6.2 15Z" fill="#fff"/>
<path d="M13.8 9.8 L18.2 14.7 M18.2 9.8 L13.8 14.7" stroke="#fff" stroke-width="1.9"/>
<rect x="2" y="23" width="20" height="1.2" fill="#8a96a0" opacity="0.8"/>
</svg>
<svg class="a" style="left:477px;top:551px" width="22" height="24" viewBox="0 0 22 24">
<path d="M1.5 3 L11 0.5 L20.5 3 L19.5 14 Q17 20 11 23 Q5 20 2.5 14Z" fill="#c8c8c8"/>
<path d="M3 4 L11 2 L19 4 L18 13 Q16 18.5 11 21 Q6 18.5 4 13Z" fill="#b02020"/>
<path d="M5 6 L11 4 L17 6 L16 9 L6 9Z" fill="#e8e8e8"/>
<circle cx="11" cy="11" r="2" fill="#20c040"/>
<path d="M6 15 L16 15 L14 19 L8 19Z" fill="#3a3a3a"/>
</svg>
<svg class="a" style="left:520px;top:551px" width="28" height="24" viewBox="0 0 28 24">
<path d="M2.5 8.6 L16.6 2.4 L25.3 14.4 L11.2 21.5Z" fill="#2a2e2e" stroke="#d8dcdc" stroke-width="1.6" stroke-linejoin="round"/>
<rect x="11.5" y="5" width="5.5" height="14" fill="#5a9a3a"/>
<rect x="11.5" y="9.5" width="5.5" height="6" fill="#7ac050"/>
<path d="M12.8 10.8 L15.5 12.5 L12.8 14.2" stroke="#e0f0d0" stroke-width="0.9" fill="none"/>
</svg>
<svg class="a" style="left:566px;top:550px" width="28" height="26" viewBox="0 0 28 26">
<text x="14" y="6" font-family="Liberation Sans" font-weight="bold" font-size="6" text-anchor="middle" fill="#050505" stroke="#202428" stroke-width="0.3">BINK</text>
<path d="M3.5 7.5 L24.8 6 L15 20Z" fill="#e8a030"/>
<path d="M3.5 7.5 L24.8 6 L24 8.5 L5 10Z" fill="#f03020"/>
<path d="M5.5 10.5 L24 8.8 L22.5 11 L7.5 12.8Z" fill="#f8e020"/>
<path d="M8 13 L22 11.3 L20 13.7 L10 15Z" fill="#4040d0"/>
<path d="M10.5 15.5 L19.5 14.2 L17.5 17 L12.5 17.5Z" fill="#f05030"/>
<text x="14.5" y="24.5" font-family="Liberation Sans" font-weight="bold" font-size="5.8" text-anchor="middle" fill="#050505" stroke="#202428" stroke-width="0.3">VIDEO</text>
</svg>
<svg class="a" style="left:615px;top:551px" width="25" height="24" viewBox="0 0 25 24">
<rect x="0" y="0" width="24.3" height="24" fill="#e03a1c"/>
<path d="M14 4 L24.3 14 L24.3 24 L8 24 L5 20Z" fill="#b82a14" opacity="0.85"/>
<path d="M4.2 19.5 Q5 9 13.6 4.6" stroke="#fff" stroke-width="4.4" fill="none" stroke-linecap="butt"/>
<path d="M13.2 4.2 L19.6 19.8" stroke="#fff" stroke-width="4.4"/>
<path d="M6 16.6 L15.8 14.6" stroke="#fff" stroke-width="3.4"/>
</svg>
<svg class="a" style="left:662px;top:551.5px" width="24" height="23" viewBox="0 0 24 23">
<defs><filter id="og" x="-30%" y="-30%" width="160%" height="160%"><feGaussianBlur stdDeviation="0.8"/></filter></defs>
<rect x="2.5" y="2" width="19" height="19" rx="5" fill="#3a2a1a" filter="url(#og)" transform="rotate(8 12 11.5)"/>
<rect x="3.3" y="2.8" width="17.4" height="17.4" rx="4.5" fill="#f4a432" transform="rotate(8 12 11.5)"/>
<path d="M4.5 5.5 Q9 6.5 10.5 10 M19.5 4.2 Q15.5 7 14 10 M4.5 18.5 Q8.5 16 10 13 M19.5 18.8 Q15 17 13.8 13.2" stroke="#fff" stroke-width="2.4" fill="none" stroke-linecap="round"/>
</svg>
<svg class="a" style="left:708px;top:553.5px" width="26" height="19" viewBox="0 0 26 19">
<rect x="0" y="0" width="25" height="18.5" fill="#fafafa"/>
<path d="M2 3 L2 16 M8 3 L8 16 M2 9.5 L8 9.5" stroke="#20a050" stroke-width="2.4"/>
<path d="M16 4 L20 4 Q24 4 24 9.5 Q24 15 20 15 L16 15Z" fill="none" stroke="#f0a030" stroke-width="2.6"/>
<path d="M9 5 L16.5 14 M16.5 5 L9 14" stroke="#111" stroke-width="1.6"/>
</svg>
<svg class="a" style="left:755px;top:550.5px" width="26" height="25" viewBox="0 0 26 25">
<defs><linearGradient id="stg" x1="0" x2="0" y1="0" y2="1"><stop offset="0" stop-color="#0a1a48"/><stop offset="0.6" stop-color="#0a2a66"/><stop offset="1" stop-color="#0a5a9a"/></linearGradient></defs>
<circle cx="12.4" cy="12.2" r="10.6" fill="url(#stg)"/>
<circle cx="16.2" cy="9.6" r="3.8" fill="none" stroke="#c8d0d8" stroke-width="1.3"/>
<circle cx="16.2" cy="9.6" r="2.1" fill="#a8b4c0"/>
<path d="M1.8 14.8 L7.5 17.2 Q10 18.5 11.5 16.5 L14.8 12" stroke="#e8eef2" stroke-width="2.6" fill="none"/>
<circle cx="9.3" cy="17.3" r="2.5" fill="#e8eef2"/>
</svg>
<svg class="a" style="left:797px;top:550px" width="36" height="26" viewBox="0 0 36 26">
<path d="M7 5 L28 3.2 L26.5 17.5 L5.8 18Z" fill="#d8dcde"/>
<path d="M8.6 6.4 L26.4 4.8 L25 16 L7.6 16.4Z" fill="#4a565e"/>
<path d="M14 18.2 L22 17.8 L24 21 L11.5 21.6Z" fill="#0a0a0a"/>
<rect x="4.8" y="1.3" width="11.5" height="8.1" fill="#0a0a0a"/>
<text x="10.5" y="8.7" font-family="Liberation Sans" font-weight="bold" font-size="9" text-anchor="middle" fill="#f8f020" letter-spacing="-0.3">99</text>
</svg>
<div class="a" style="left:860.5px;top:555.5px;font:9.6px 'Liberation Sans';color:#c4c4c4;line-height:11px;letter-spacing:-0.3px">ES</div>
<svg class="a" style="left:882px;top:560px" width="10" height="8"><path d="M1.5 6 L4.5 2.5 L7.5 6Z" fill="#e8e8e8"/></svg>
<svg class="a" style="left:898px;top:557px" width="16" height="14" viewBox="0 0 16 14">
<path d="M1.5 1 L1.5 12.5" stroke="#c8c8c8" stroke-width="1.4"/>
<path d="M2 1.5 L7 1.5 L7.5 3 L11 3 L11 7 L7 7 L6.5 5.5 L2 5.5Z" fill="#e0e0e0"/>
<circle cx="8.5" cy="9.5" r="3.8" fill="#e02020"/>
<path d="M6.8 7.8 L10.2 11.2 M10.2 7.8 L6.8 11.2" stroke="#fff" stroke-width="1.2"/>
</svg>
<svg class="a" style="left:917px;top:557px" width="14" height="14" viewBox="0 0 14 14">
<rect x="3.5" y="2.5" width="9" height="8" fill="none" stroke="#d0d0d0" stroke-width="1.4"/>
<rect x="1" y="1" width="4" height="3" fill="#d0d0d0"/>
<path d="M1 4 L1 12 L8 12" stroke="#d0d0d0" stroke-width="1.2" fill="none"/>
</svg>
<svg class="a" style="left:934px;top:557px" width="14" height="14" viewBox="0 0 14 14">
<path d="M1 4.5 L3.5 4.5 L7 1.5 L7 12 L3.5 9 L1 9Z" fill="#e0e0e0"/>
<path d="M9 4.5 Q10.3 6.8 9 9 M11 3 Q13 6.8 11 10.5" stroke="#d0d0d0" stroke-width="1.1" fill="none"/>
</svg>
<div class="a" style="left:961.7px;top:553.3px;font:8.8px 'Liberation Sans';color:#e0e0e0;line-height:9px;white-space:nowrap;transform:scaleY(1.13);transform-origin:0 0">07:24 p.m.</div>
<div class="a" style="left:960.4px;top:565.6px;font:8.8px 'Liberation Sans';color:#e0e0e0;line-height:9px;white-space:nowrap;transform:scaleY(1.13);transform-origin:0 0">08/07/2016</div>
</body></html>
